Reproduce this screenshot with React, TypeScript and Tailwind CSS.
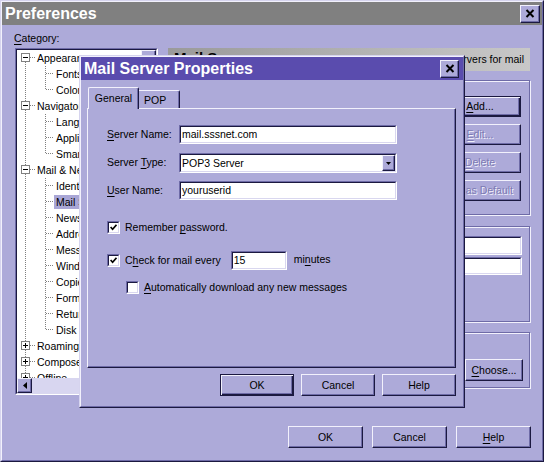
import React from "react";

function U({ children }: { children: React.ReactNode }) {
  return <span className="underline decoration-1 underline-offset-[1.5px]">{children}</span>;
}

function XIcon() {
  return (
    <svg width="10" height="9" viewBox="0 0 10 9">
      <path d="M1.5 1 L8.5 8 M8.5 1 L1.5 8" stroke="#000" strokeWidth="2" fill="none" />
    </svg>
  );
}

function CloseBtn({ className }: { className: string }) {
  return (
    <div
      className={`flex items-center justify-center shrink-0 bg-[#adaad9] border border-t-[#f2f1fc] border-l-[#f2f1fc] border-r-[#1b1940] border-b-[#1b1940] shadow-[inset_-1px_-1px_0_#6e6ba7] ${className}`}
    >
      <XIcon />
    </div>
  );
}

function Btn({
  children,
  className = "",
  def = false,
  disabled = false,
}: {
  children: React.ReactNode;
  className?: string;
  def?: boolean;
  disabled?: boolean;
}) {
  const frame = def
    ? "border border-[#1b1940] shadow-[inset_1px_1px_0_#f2f1fc,inset_-1px_-1px_0_#1b1940,inset_-2px_-2px_0_#6e6ba7]"
    : "border border-t-[#f2f1fc] border-l-[#f2f1fc] border-r-[#1b1940] border-b-[#1b1940] shadow-[inset_-1px_-1px_0_#6e6ba7]";
  const txt = disabled ? "text-[#7d7ab3] [text-shadow:1px_1px_0_#f2f1fc]" : "text-black";
  return (
    <div className={`flex items-center justify-center shrink-0 bg-[#adaad9] text-[10.5px] leading-none ${frame} ${txt} ${className}`}>
      {children}
    </div>
  );
}

function Field({
  className = "",
  top = false,
  children,
}: {
  className?: string;
  top?: boolean;
  children?: React.ReactNode;
}) {
  return (
    <div className={`shrink-0 border border-t-[#6e6ba7] border-l-[#6e6ba7] border-r-white border-b-white ${className}`}>
      <div
        className={`h-full border border-t-[#1b1940] border-l-[#1b1940] border-r-[#d9d7ef] border-b-[#d9d7ef] bg-white flex px-[1px] text-[10.5px] text-black overflow-hidden whitespace-nowrap ${
          top ? "items-start pt-[1px] leading-[14px]" : "items-center leading-none"
        }`}
      >
        {children}
      </div>
    </div>
  );
}

function Check({ checked }: { checked: boolean }) {
  return (
    <div className="w-[13px] h-[13px] shrink-0 border border-t-[#6e6ba7] border-l-[#6e6ba7] border-r-white border-b-white">
      <div className="w-full h-full border border-t-[#1b1940] border-l-[#1b1940] border-r-[#d9d7ef] border-b-[#d9d7ef] bg-white flex items-center justify-center">
        {checked && (
          <svg width="7" height="7" viewBox="0 0 7 7">
            <path d="M0.6 3 L2.6 5.3 L6.5 0.9" fill="none" stroke="#000" strokeWidth="1.7" />
          </svg>
        )}
      </div>
    </div>
  );
}

type Node = { label: string; level: 0 | 1; exp?: boolean; first?: boolean; last?: boolean; sel?: boolean };

const nodes: Node[] = [
  { label: "Appearance", level: 0, exp: true, first: true },
  { label: "Fonts", level: 1 },
  { label: "Colors", level: 1, last: true },
  { label: "Navigator", level: 0, exp: true },
  { label: "Languages", level: 1 },
  { label: "Applications", level: 1 },
  { label: "Smart Browsing", level: 1, last: true },
  { label: "Mail & Newsgroups", level: 0, exp: true },
  { label: "Identity", level: 1 },
  { label: "Mail Servers", level: 1, sel: true },
  { label: "Newsgroup Servers", level: 1 },
  { label: "Addressing", level: 1 },
  { label: "Messages", level: 1 },
  { label: "Window Settings", level: 1 },
  { label: "Copies and Folders", level: 1 },
  { label: "Formatting", level: 1 },
  { label: "Return Receipts", level: 1 },
  { label: "Disk Space", level: 1, last: true },
  { label: "Roaming Access", level: 0 },
  { label: "Composer", level: 0 },
  { label: "Offline", level: 0 },
  { label: "Advanced", level: 0 },
];

function TreeRow({ n }: { n: Node }) {
  const dot = {
    stroke: "#808080",
    strokeWidth: 1,
    strokeDasharray: "1 1",
    shapeRendering: "crispEdges" as const,
  };
  return (
    <div className="flex h-[16px] items-center whitespace-nowrap shrink-0">
      {n.level === 0 ? (
        <svg width="18" height="16" className="shrink-0">
          <line x1="8.5" y1={n.first ? 8 : 0} x2="8.5" y2="16" {...dot} />
          <line x1="13" y1="7.5" x2="18" y2="7.5" {...dot} />
          <rect x="4.5" y="3.5" width="8" height="8" fill="#fff" stroke="#808080" shapeRendering="crispEdges" />
          <line x1="6" y1="7.5" x2="11" y2="7.5" stroke="#000" shapeRendering="crispEdges" />
          {!n.exp && <line x1="8.5" y1="5" x2="8.5" y2="10" stroke="#000" shapeRendering="crispEdges" />}
        </svg>
      ) : (
        <svg width="37" height="16" className="shrink-0">
          <line x1="8.5" y1="0" x2="8.5" y2="16" {...dot} />
          <line x1="28.5" y1="0" x2="28.5" y2={n.last ? 8 : 16} {...dot} />
          <line x1="29" y1="7.5" x2="37" y2="7.5" {...dot} />
        </svg>
      )}
      <span className={`px-[2px] leading-[14px] ${n.sel ? "bg-[#a9a6d6]" : ""}`}>{n.label}</span>
    </div>
  );
}

function ScrollBtn({ dir }: { dir: "up" | "left" }) {
  return (
    <div className="w-[15px] h-[15px] shrink-0 flex items-center justify-center bg-[#adaad9] border border-t-[#f2f1fc] border-l-[#f2f1fc] border-r-[#1b1940] border-b-[#1b1940] shadow-[inset_-1px_-1px_0_#6e6ba7]">
      {dir === "up" ? (
        <svg width="7" height="4" viewBox="0 0 7 4">
          <path d="M3.5 0 L7 4 L0 4 Z" fill="#000" />
        </svg>
      ) : (
        <svg width="4" height="7" viewBox="0 0 4 7">
          <path d="M0 3.5 L4 0 L4 7 Z" fill="#000" />
        </svg>
      )}
    </div>
  );
}

function TreeBox() {
  return (
    <div className="w-[143px] h-[347px] border border-t-[#6e6ba7] border-l-[#6e6ba7] border-r-white border-b-white">
      <div className="w-full h-full border border-t-[#1b1940] border-l-[#1b1940] border-r-[#d9d7ef] border-b-[#d9d7ef] flex flex-col">
        <div className="flex flex-1 min-h-0">
          <div className="flex-1 bg-white overflow-hidden flex flex-col">
            {nodes.map((n) => (
              <TreeRow key={n.label} n={n} />
            ))}
          </div>
          <div className="w-[15px] flex flex-col bg-[#d8d6f0]">
            <ScrollBtn dir="up" />
            <div className="h-[40px] shrink-0 bg-[#adaad9] border border-t-[#f2f1fc] border-l-[#f2f1fc] border-r-[#1b1940] border-b-[#1b1940] shadow-[inset_-1px_-1px_0_#6e6ba7]" />
            <div className="flex-1" />
          </div>
        </div>
        <div className="h-[15px] flex shrink-0 bg-[#d8d6f0]">
          <ScrollBtn dir="left" />
          <div className="flex-1" />
          <div className="w-[15px] bg-[#adaad9]" />
        </div>
      </div>
    </div>
  );
}

const groupCls =
  "relative border border-[#6e6ba7] shadow-[inset_1px_1px_0_#f2f1fc,1px_1px_0_#f2f1fc]";

export default function App() {
  return (
    <div className="relative w-[544px] h-[462px] overflow-hidden font-['Liberation_Sans',Arial,Helvetica,sans-serif] text-[10.5px] text-black bg-[#adaad9]">
      {/* Preferences window */}
      <div className="w-full h-full border border-t-[#d6d4ee] border-l-[#d6d4ee] border-r-[#1b1940] border-b-[#1b1940]">
        <div className="w-full h-full border border-t-[#f2f1fc] border-l-[#f2f1fc] border-r-[#6e6ba7] border-b-[#6e6ba7] flex flex-col">
          <div className="h-[23px] bg-[#808080] flex items-center pl-[3px] pr-[2px] shrink-0">
            <span className="text-white font-bold text-[16px] leading-none flex-1">Preferences</span>
            <CloseBtn className="w-[20px] h-[18px]" />
          </div>

          <div className="flex h-[401px] pt-[7px] shrink-0">
            <div className="flex flex-col pl-[13px]">
              <div className="h-[12px] leading-[12px] -ml-px">
                <U>C</U>ategory:
              </div>
              <div className="mt-[4px]">
                <TreeBox />
              </div>
            </div>

            <div className="ml-[10px] w-[362px] flex flex-col pt-[16px]">
              <div className="h-[23px] shrink-0 bg-linear-to-r from-[#9a9a9a] to-[#c8c8c8] flex items-center justify-between pl-[6px] pr-[6px]">
                <span className="font-bold text-[15px] leading-none self-start mt-[2px]">Mail Servers</span>
                <span>Specify servers for mail</span>
              </div>

              <div className={`${groupCls} mt-[9px] h-[135px] shrink-0 flex pt-[15px] pl-[9px] pr-[8px] gap-[9px]`}>
                <span className="absolute -top-[7px] left-[6px] px-[2px] bg-[#adaad9] leading-[12px]">
                  Incoming Mail Servers
                </span>
                <Field top className="flex-1 h-[108px]">
                  <span className="bg-[#5a4cae] text-white px-[1px]">mail.sssnet.com (Default)</span>
                </Field>
                <div className="flex flex-col gap-[7px] w-[82px] shrink-0">
                  <Btn def className="h-[21px]">
                    <span>
                      <U>A</U>dd...
                    </span>
                  </Btn>
                  <Btn disabled className="h-[21px]">
                    <span>
                      <U>E</U>dit...
                    </span>
                  </Btn>
                  <Btn disabled className="h-[21px]">
                    <span>
                      <U>D</U>elete
                    </span>
                  </Btn>
                  <Btn disabled className="h-[21px]">
                    Set as Default
                  </Btn>
                </div>
              </div>

              <div className={`${groupCls} mt-[11px] h-[96px] shrink-0 flex flex-col pt-[9px] pl-[9px] pr-[7px]`}>
                <span className="absolute -top-[7px] left-[6px] px-[2px] bg-[#adaad9] leading-[12px]">
                  Outgoing Mail Server
                </span>
                <div className="flex items-center justify-between h-[19px]">
                  <span>Outgoing mail (SMTP) server:</span>
                  <Field className="w-[160px] h-[19px]">mail.sssnet.com</Field>
                </div>
                <div className="flex items-center justify-between h-[18px] mt-[2px]">
                  <span>Outgoing mail server user name:</span>
                  <Field className="w-[160px] h-[18px]">youruserid</Field>
                </div>
                <div className="flex justify-end pr-[49px] mt-[7px] leading-[12px]">
                  Use Secure Socket Layer (SSL) or TLS for outgoing messages:
                </div>
                <div className="flex gap-[14px] mt-[6px] leading-[12px]">
                  <span>○ Never</span>
                  <span>◉ If Possible</span>
                  <span>○ Always</span>
                </div>
              </div>

              <div className={`${groupCls} mt-[10px] h-[56px] shrink-0 flex items-start pt-[26px] pl-[9px] pr-[6px] gap-[8px]`}>
                <span className="absolute -top-[7px] left-[6px] px-[2px] bg-[#adaad9] leading-[12px]">
                  Local mail directory:
                </span>
                <Field className="flex-1 h-[20px] mt-[1px]">C:\Program Files\Netscape\Users\default\mail</Field>
                <Btn className="w-[58px] h-[22px]">
                  <span>
                    <U>C</U>hoose...
                  </span>
                </Btn>
              </div>
            </div>
          </div>

          <div className="flex justify-end gap-[9px] pr-[11px] h-[22px] shrink-0">
            <Btn className="w-[75px] h-[22px]">OK</Btn>
            <Btn className="w-[75px] h-[22px]">Cancel</Btn>
            <Btn className="w-[75px] h-[22px]">
              <span>
                <U>H</U>elp
              </span>
            </Btn>
          </div>
        </div>
      </div>

      {/* Mail Server Properties dialog */}
      <div className="absolute left-[79px] top-[55px] w-[386px] h-[353px] bg-[#adaad9] border border-t-[#d6d4ee] border-l-[#d6d4ee] border-r-[#1b1940] border-b-[#1b1940]">
        <div className="w-full h-full border border-t-[#f2f1fc] border-l-[#f2f1fc] border-r-[#6e6ba7] border-b-[#6e6ba7] flex flex-col">
          <div className="h-[23px] bg-[#5a4cae] flex items-center pl-[3px] pr-[4px] shrink-0">
            <span className="text-white font-bold text-[16px] leading-none flex-1">Mail Server Properties</span>
            <CloseBtn className="w-[19px] h-[18px]" />
          </div>

          <div className="flex items-end h-[22px] mt-[7px] pl-[7px] shrink-0">
            <div className="relative z-10 h-[22px] w-[51px] bg-[#adaad9] border-t border-l border-r border-t-[#f2f1fc] border-l-[#f2f1fc] border-r-[#1b1940] rounded-t-[2px] shadow-[inset_-1px_0_0_#6e6ba7] flex justify-center pt-[4px] leading-[12px]">
              General
            </div>
            <div className="h-[18px] w-[41px] mb-[1px] border-t border-r border-t-[#f2f1fc] border-r-[#1b1940] rounded-tr-[2px] shadow-[inset_-1px_0_0_#6e6ba7] pl-[5px] pt-[3px] leading-[12px]">
              POP
            </div>
          </div>

          <div className="-mt-px ml-[6px] w-[369px] h-[260px] shrink-0 border border-t-[#f2f1fc] border-l-[#f2f1fc] border-r-[#1b1940] border-b-[#1b1940] shadow-[inset_-1px_-1px_0_#6e6ba7] flex flex-col pl-[19px] pt-[16px]">
            <div className="flex items-center h-[19px]">
              <div className="w-[72px]">
                <U>S</U>erver Name:
              </div>
              <Field className="w-[218px] h-[19px]">mail.sssnet.com</Field>
            </div>
            <div className="flex items-center h-[20px] mt-[9px]">
              <div className="w-[72px]">
                Server <U>T</U>ype:
              </div>
              <div className="w-[218px] h-[20px] shrink-0 border border-t-[#6e6ba7] border-l-[#6e6ba7] border-r-white border-b-white">
                <div className="h-full border border-t-[#1b1940] border-l-[#1b1940] border-r-[#d9d7ef] border-b-[#d9d7ef] bg-white flex items-center">
                  <span className="flex-1 pl-[1px] leading-none">POP3 Server</span>
                  <div className="w-[13px] h-full flex items-center justify-center bg-[#adaad9] border border-t-[#f2f1fc] border-l-[#f2f1fc] border-r-[#1b1940] border-b-[#1b1940] shadow-[inset_-1px_-1px_0_#6e6ba7]">
                    <svg width="5" height="3" viewBox="0 0 5 3">
                      <path d="M0 0 L5 0 L2.5 3 Z" fill="#000" />
                    </svg>
                  </div>
                </div>
              </div>
            </div>
            <div className="flex items-center h-[19px] mt-[8px]">
              <div className="w-[72px]">
                <U>U</U>ser Name:
              </div>
              <Field className="w-[218px] h-[19px]">youruserid</Field>
            </div>

            <div className="flex items-center h-[13px] mt-[21px]">
              <Check checked />
              <span className="ml-[5px] leading-none">
                Remember <U>p</U>assword.
              </span>
            </div>

            <div className="flex items-center h-[19px] mt-[17px]">
              <Check checked />
              <span className="ml-[5px] leading-none">
                C<U>h</U>eck for mail every
              </span>
              <Field className="ml-[10px] w-[56px] h-[19px]">15</Field>
              <span className="ml-[7px] -mt-[3px] leading-none">
                mi<U>n</U>utes
              </span>
            </div>

            <div className="flex items-center h-[13px] mt-[11px] pl-[19px]">
              <Check checked={false} />
              <span className="ml-[5px] leading-none">
                <U>A</U>utomatically download any new messages
              </span>
            </div>
          </div>

          <div className="flex justify-end gap-[7px] pr-[7px] mt-[6px] shrink-0">
            <Btn def className="w-[74px] h-[22px]">
              OK
            </Btn>
            <Btn className="w-[74px] h-[22px]">Cancel</Btn>
            <Btn className="w-[74px] h-[22px]">Help</Btn>
          </div>
        </div>
      </div>
    </div>
  );
}
